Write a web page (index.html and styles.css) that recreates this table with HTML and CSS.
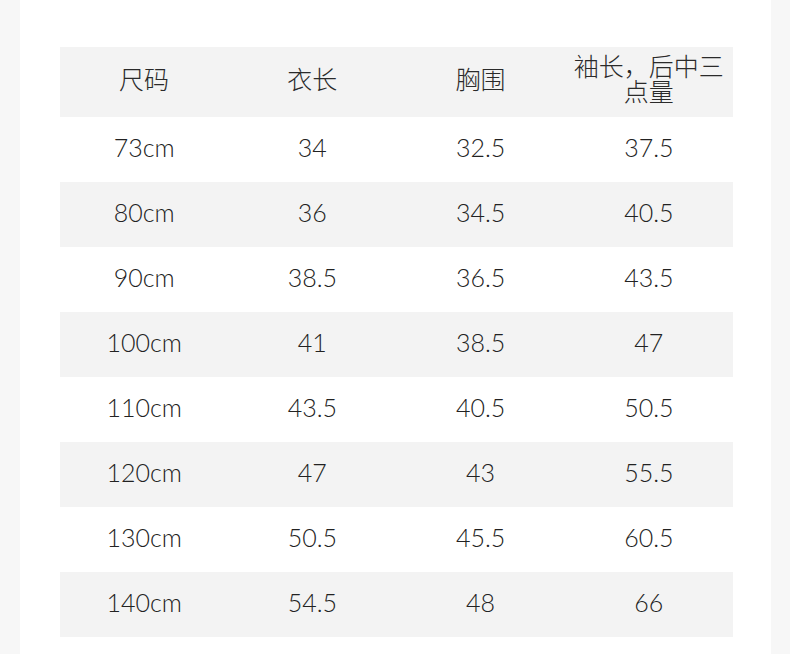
FILE: index.html
```html
<!DOCTYPE html>
<html lang="zh">
<head>
<meta charset="utf-8">
<link rel="stylesheet" href="styles.css">
</head>
<body>
<div class="page">
  <div class="edge"></div>
  <main class="content">
    <div class="size-table">
      <div class="row head">
        <div class="cell">尺码</div>
        <div class="cell">衣长</div>
        <div class="cell">胸围</div>
        <div class="cell">袖长，后中三点量</div>
      </div>
      <div class="row"><div class="cell">73cm</div><div class="cell">34</div><div class="cell">32.5</div><div class="cell">37.5</div></div>
      <div class="row alt"><div class="cell">80cm</div><div class="cell">36</div><div class="cell">34.5</div><div class="cell">40.5</div></div>
      <div class="row"><div class="cell">90cm</div><div class="cell">38.5</div><div class="cell">36.5</div><div class="cell">43.5</div></div>
      <div class="row alt"><div class="cell">100cm</div><div class="cell">41</div><div class="cell">38.5</div><div class="cell">47</div></div>
      <div class="row"><div class="cell">110cm</div><div class="cell">43.5</div><div class="cell">40.5</div><div class="cell">50.5</div></div>
      <div class="row alt"><div class="cell">120cm</div><div class="cell">47</div><div class="cell">43</div><div class="cell">55.5</div></div>
      <div class="row"><div class="cell">130cm</div><div class="cell">50.5</div><div class="cell">45.5</div><div class="cell">60.5</div></div>
      <div class="row alt"><div class="cell">140cm</div><div class="cell">54.5</div><div class="cell">48</div><div class="cell">66</div></div>
    </div>
  </main>
  <div class="edge right"></div>
</div>
</body>
</html>
```
FILE: styles.css
```css
html, body {
  margin: 0;
  padding: 0;
  background: #ffffff;
}
.page {
  display: flex;
  width: 790px;
  height: 654px;
  overflow: hidden;
}
.edge {
  width: 20px;
  flex: none;
  background: #f7f7f7;
}
.edge.right {
  width: 19px;
}
.content {
  flex: 1;
  background: #ffffff;
  padding: 47px 0 0 40px;
}
.size-table {
  width: 673px;
  display: flex;
  flex-direction: column;
}
.row {
  display: grid;
  grid-template-columns: repeat(4, 1fr);
  height: 65px;
  align-items: center;
  font-family: "Lato", "Noto Sans", sans-serif;
  font-weight: 300;
  font-size: 25px;
  color: #222222;
  padding-bottom: 5px;
  box-sizing: border-box;
}
.row.alt {
  background: #f3f3f3;
}
.row.head {
  height: 70px;
  background: #f3f3f3;
  font-family: "Noto Sans CJK SC", sans-serif;
  font-weight: 300;
  color: #2a2a2a;
  line-height: 25px;
  padding-bottom: 8px;
}
.cell {
  text-align: center;
}
```
